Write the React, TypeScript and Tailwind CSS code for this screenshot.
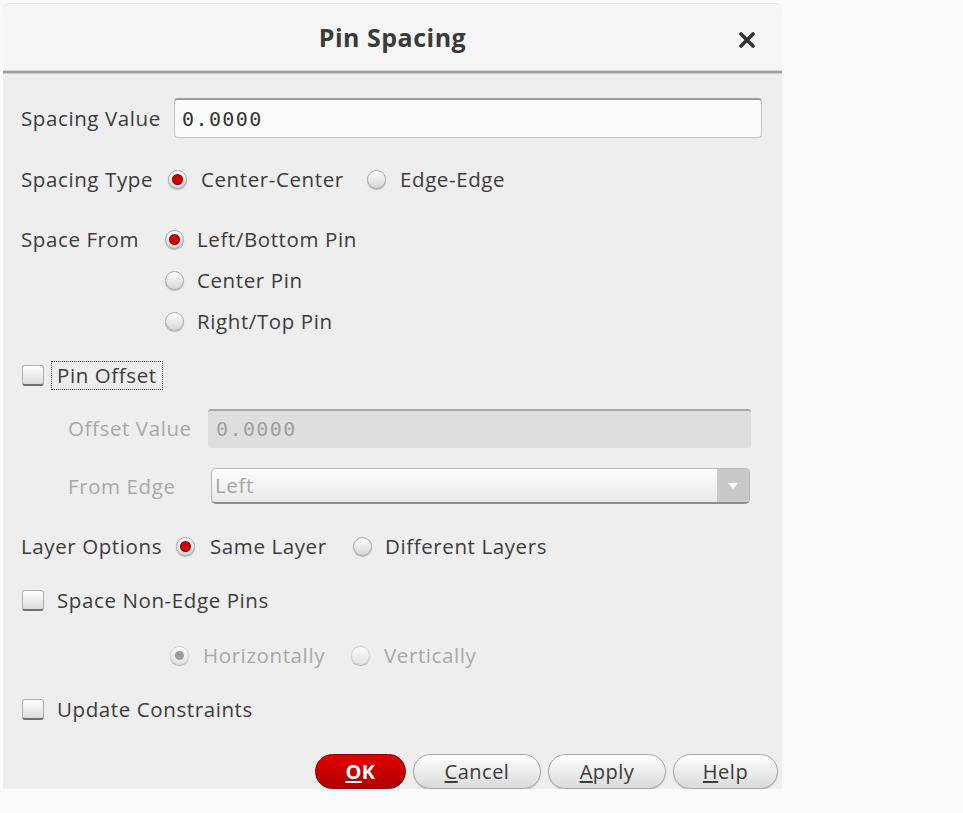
import React from "react";

const font = { fontFamily: '"Open Sans", "DejaVu Sans", sans-serif' };

function Radio({ checked, disabled }: { checked?: boolean; disabled?: boolean }) {
  return (
    <span
      className={`relative inline-flex h-[19px] w-[19px] shrink-0 items-center justify-center rounded-full border ${
        disabled ? "border-[#d4d4d4] bg-[linear-gradient(#fafafa,#e2e2e2)]" : "border-[#a9a9a9] bg-[linear-gradient(#ffffff,#d6d6d6)]"
      } shadow-[0_1px_1px_rgba(0,0,0,0.25)]`}
    >
      {checked ? (
        <span
          className={`h-[9px] w-[9px] rounded-full ${
            disabled ? "bg-[#9c9c9c]" : "bg-[#d10000] shadow-[0_0_0_1px_#8a0000]"
          }`}
        />
      ) : null}
    </span>
  );
}

function Checkbox() {
  return (
    <span className="inline-block h-[21px] w-[22px] shrink-0 rounded-[3px] border border-[#b0b0b0] border-b-2 border-b-[#6f6f6f] bg-[linear-gradient(#ffffff,#dcdcdc)]" />
  );
}

function Btn({ label, accel, primary, width }: { label: string; accel: string; primary?: boolean; width: string }) {
  const rest = label.slice(1);
  return (
    <button
      type="button"
      className={`${width} h-[35px] rounded-full text-[20px] tracking-[0.5px] ${
        primary
          ? "bg-[linear-gradient(#e00000,#b00000)] font-bold text-white border border-[#8c0000]"
          : "border border-[#a5a5a5] bg-[linear-gradient(#ffffff,#dadada)] text-[#3a3a3a] shadow-[0_1px_1px_rgba(0,0,0,0.2)]"
      }`}
      style={font}
    >
      <span className="underline underline-offset-2">{accel}</span>
      {rest}
    </button>
  );
}

export default function App() {
  return (
    <div className="min-h-[813px] w-[963px] bg-[#fafafa] pl-[3px] pt-[3px]" style={font}>
      <div className="flex w-[779px] flex-col overflow-hidden rounded-t-[7px] border-t border-[#e4e4e4] bg-[#eeeeee] text-[20.5px] tracking-[0.6px] text-[#3c3c3c]">
        <div className="relative flex h-[66px] items-center justify-center bg-[#f6f6f6]">
          <span className="mt-[2px] text-[25px] font-bold tracking-[0.5px] text-[#3a3a3a]">Pin Spacing</span>
          <svg className="absolute right-[27px] top-[28px]" width="16" height="16" viewBox="0 0 16 16">
            <path d="M2 2 L14 14 M14 2 L2 14" stroke="#333" strokeWidth="3.6" strokeLinecap="round" />
          </svg>
        </div>
        <div className="h-px bg-[#d6d6d6]" />
        <div className="h-[2px] bg-[#9d9d9d]" />
        <div className="h-px bg-[#cdcdcd]" />

        <div className="flex flex-col pl-[18px] pr-[20px] pt-[24px]">
          <div className="flex h-10 items-center">
            <span className="w-[153px]">Spacing Value</span>
            <div className="flex h-10 flex-1 items-center rounded-[4px] border border-[#c4c4c4] border-t-2 border-t-[#9c9c9c] bg-[#fbfbfb] pl-[7px]">
              <span className="text-[20px] tracking-[1.4px] text-[#333]" style={{ fontFamily: '"DejaVu Sans Mono", monospace' }}>
                0.0000
              </span>
            </div>
          </div>

          <div className="mt-[21px] flex h-10 items-center">
            <span className="w-[147px]">Spacing Type</span>
            <Radio checked />
            <span className="ml-[14px] w-[166px]">Center-Center</span>
            <Radio />
            <span className="ml-[14px]">Edge-Edge</span>
          </div>

          <div className="mt-[20px] flex h-10 items-center">
            <span className="w-[144px]">Space From</span>
            <Radio checked />
            <span className="ml-[13px]">Left/Bottom Pin</span>
          </div>
          <div className="mt-px flex h-10 items-center pl-[144px]">
            <Radio />
            <span className="ml-[13px]">Center Pin</span>
          </div>
          <div className="mt-px flex h-10 items-center pl-[144px]">
            <Radio />
            <span className="ml-[13px]">Right/Top Pin</span>
          </div>

          <div className="mt-[14px] flex h-10 items-center pl-px">
            <Checkbox />
            <span className="ml-[7px] border border-dotted border-[#444] px-[5px] leading-[27px]">Pin Offset</span>
          </div>

          <div className="mt-[13px] flex h-10 items-center pl-[47px]">
            <span className="w-[140px] text-[#a9a9a9]">Offset Value</span>
            <div className="flex h-[39px] w-[543px] items-center rounded-[3px] border-t-2 border-t-[#a8a8a8] bg-[#dedede] pl-[8px]">
              <span className="text-[20px] tracking-[1.4px] text-[#9e9e9e]" style={{ fontFamily: '"DejaVu Sans Mono", monospace' }}>
                0.0000
              </span>
            </div>
          </div>

          <div className="mt-[20px] flex h-9 items-center pl-[47px]">
            <span className="w-[143px] text-[#a9a9a9]">From Edge</span>
            <div className="flex h-9 w-[539px] overflow-hidden rounded-[5px] border border-[#b9b9b9] border-b-2 border-b-[#8e8e8e] bg-[linear-gradient(#fdfdfd,#e9e9e9)]">
              <span className="flex flex-1 items-center pl-[3px] text-[#a5a5a5]">Left</span>
              <span className="flex w-[32px] items-center justify-center bg-[#c9c9c9]">
                <svg width="10" height="6" viewBox="0 0 10 6">
                  <path d="M0 0 H10 L5 6 Z" fill="#fff" />
                </svg>
              </span>
            </div>
          </div>

          <div className="mt-[22px] flex h-10 items-center">
            <span className="w-[155px]">Layer Options</span>
            <Radio checked />
            <span className="ml-[15px] w-[143px]">Same Layer</span>
            <Radio />
            <span className="ml-[13px]">Different Layers</span>
          </div>

          <div className="mt-[14px] flex h-10 items-center pl-px">
            <Checkbox />
            <span className="ml-[13px]">Space Non-Edge Pins</span>
          </div>

          <div className="mt-[15px] flex h-10 items-center pl-[149px] text-[#a9a9a9]">
            <Radio checked disabled />
            <span className="ml-[14px] w-[148px]">Horizontally</span>
            <Radio disabled />
            <span className="ml-[14px]">Vertically</span>
          </div>

          <div className="mt-[14px] flex h-10 items-center pl-px">
            <Checkbox />
            <span className="ml-[13px]">Update Constraints</span>
          </div>
        </div>

        <div className="mt-[25px] flex justify-end gap-[7px] pr-[4px]">
          <Btn label="OK" accel="O" primary width="w-[91px]" />
          <Btn label="Cancel" accel="C" width="w-[128px]" />
          <Btn label="Apply" accel="A" width="w-[118px]" />
          <Btn label="Help" accel="H" width="w-[105px]" />
        </div>
      </div>
    </div>
  );
}
